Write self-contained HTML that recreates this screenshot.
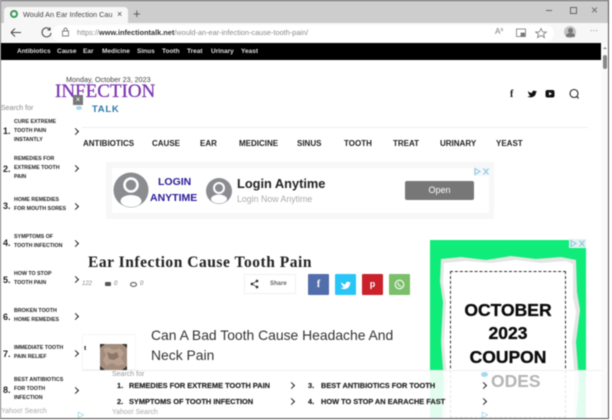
<!DOCTYPE html>
<html><head><meta charset="utf-8">
<style>
html,body{margin:0;padding:0;background:#fff}
#p{position:relative;width:612px;height:420px;overflow:hidden;background:#fff;font-family:"Liberation Sans",sans-serif;color:#111;filter:blur(.45px)}
.a{position:absolute;white-space:nowrap}
.n{font-size:6.5px;font-weight:bold;color:#ddd;top:48px}
.m{font-size:8px;font-weight:bold;color:#222;top:139px}
.sn{font-size:5.3px;font-weight:bold;line-height:9px;color:#222;white-space:nowrap;position:absolute;left:14px}
.num{position:absolute;left:3px;font-size:9px;font-weight:bold;color:#222}
.chev{position:absolute;width:4px;height:4px;border-top:1.2px solid #222;border-right:1.2px solid #222;transform:rotate(45deg)}
.soc{position:absolute;top:274px;width:21px;height:21px;color:#fff;text-align:center;font-weight:bold;font-size:10px;line-height:21px;border-radius:1px}
.b{font-size:7.4px;font-weight:bold;color:#222;-webkit-text-stroke:.15px #222}
</style></head><body><div id="p">
<!-- browser chrome -->
<div class="a" style="left:0;top:1px;width:608px;height:22px;background:#cdcdcd"></div>
<div class="a" style="left:0;top:0;width:608px;height:1px;background:#555"></div>
<div class="a" style="left:4px;top:7px;width:124px;height:16px;background:#f7f7f7;border-radius:4px 4px 0 0"></div>
<div class="a" style="left:10px;top:10px;width:4px;height:4px;border:2px solid #3a9a55;border-radius:50%"></div>
<div class="a" style="left:23px;top:10px;font-size:7.3px;color:#444;width:89px;overflow:hidden">Would An Ear Infection Cause To</div>
<div class="a" style="left:117px;top:9px;font-size:9px;color:#444">×</div>
<div class="a" style="left:133px;top:6px;font-size:13px;color:#555">+</div>
<div class="a" style="left:0;top:23px;width:608px;height:20px;background:#f7f7f7"></div>
<div class="a" style="left:52px;top:25px;width:502px;height:17px;background:#fff;border-radius:9px"></div>
<svg class="a" style="left:8px;top:25px" width="55" height="16" fill="none" stroke="#444" stroke-width="1"><path d="M3 7.500H13M3 7.500L7 3.500M3 7.500L7 11.500"/><path d="M42 4.500A4.500 4.500 0 1 0 43 8M42 2.500V5H39.500"/></svg>
<svg class="a" style="left:61px;top:27px" width="10" height="11" fill="none" stroke="#666" stroke-width=".8"><rect x="1.500" y="4" width="6" height="5"/><path d="M3 4V2.500A1.500 1.500 0 0 1 6 2.500V4"/></svg>
<div class="a" style="left:77px;top:28px;font-size:7.35px;color:#8a8a8a">https://<b style="color:#333;font-weight:bold">www.infectiontalk.net</b>/would-an-ear-infection-cause-tooth-pain/</div>
<div class="a" style="left:495px;top:27px;font-size:8px;color:#777">A<span style="font-size:5px;vertical-align:3px">a</span></div>
<svg class="a" style="left:515px;top:27px" width="50" height="12" fill="none" stroke="#777" stroke-width=".8"><rect x="1.500" y="2" width="9" height="7.500"/><path d="M6 6H9.500V9.500H6Z" fill="#777"/><path d="M26 1.500L27.700 5H31.300L28.500 7.300L29.500 10.500L26 8.500L22.500 10.500L23.500 7.300L20.700 5H24.300Z"/></svg>
<div class="a" style="left:564px;top:26px;width:12px;height:12px;background:#c4c4c4;border-radius:50%"></div>
<div class="a" style="left:568px;top:28px;width:5px;height:5px;background:#777;border-radius:50%"></div>
<div class="a" style="left:566px;top:33px;width:9px;height:4px;background:#777;border-radius:4px 4px 1px 1px"></div>
<div class="a" style="left:590px;top:26px;font-size:8px;color:#666">···</div>
<div class="a" style="left:546px;top:10px;width:6px;height:1px;background:#666"></div>
<div class="a" style="left:570px;top:7px;width:5px;height:5px;border:1px solid #666"></div>
<div class="a" style="left:591px;top:3px;font-size:12px;color:#666">×</div>
<!-- top bar -->
<div class="a" style="left:0;top:43px;width:601px;height:17px;background:#000"></div>
<div class="a n" style="left:17px">Antibiotics</div>
<div class="a n" style="left:57px">Cause</div>
<div class="a n" style="left:83px">Ear</div>
<div class="a n" style="left:102px">Medicine</div>
<div class="a n" style="left:137px">Sinus</div>
<div class="a n" style="left:162px">Tooth</div>
<div class="a n" style="left:187px">Treat</div>
<div class="a n" style="left:211px">Urinary</div>
<div class="a n" style="left:241px">Yeast</div>
<!-- scrollbar -->
<div class="a" style="left:601px;top:43px;width:7px;height:375px;background:#fafafa"></div>
<div class="a" style="left:603px;top:47px;width:0;height:0;border-left:2px solid transparent;border-right:2px solid transparent;border-bottom:2px solid #888"></div>
<div class="a" style="left:603px;top:55px;width:4px;height:14px;background:#888;border-radius:2px"></div>
<!-- header -->
<div class="a" style="left:66px;top:75px;font-size:7.200px;color:#444">Monday, October 23, 2023</div>
<div class="a" style="left:55px;top:81px;font-size:19px;font-family:'Liberation Serif',serif;color:#7a35b0;-webkit-text-stroke:.25px #7a35b0">INFECTION</div>
<div class="a" style="left:92px;top:104px;font-size:9.500px;font-weight:bold;letter-spacing:.7px;color:#2d7aa8">TALK</div>
<div class="a" style="left:73px;top:95px;width:10px;height:10px;background:#777;color:#fff;font-size:8px;line-height:10px;text-align:center">×</div>
<div class="a" style="left:76px;top:106px;width:6px;height:4px;background:#a8d8ec;border-radius:50%"></div>
<div class="a" style="left:510px;top:89px;font-size:10px;font-weight:bold;font-family:'Liberation Serif',serif;color:#111">f</div>
<svg class="a" style="left:524px;top:87px" width="64" height="14"><path d="M4 4C5.500 5.500 7 6 8 6C8 3.800 10.300 3 11.500 4.300L13 4L12 5.500C12 8.500 9 10.800 6 10.300C5 10.300 4 10 3.500 9.500C4.800 9.500 5.500 9 6.300 8.500C5 8 4.300 6.500 4 4Z" fill="#111"/><rect x="21.500" y="3" width="9" height="7.500" rx="2" fill="#111"/><path d="M25 5V8.500L28 6.800Z" fill="#fff"/><circle cx="50" cy="6.500" r="4" fill="none" stroke="#222" stroke-width="1.100"/><path d="M53 9.500L54.500 11.500" stroke="#222" stroke-width="1.200"/></svg>
<div class="a" style="left:82px;top:127px;width:506px;height:1px;background:#eee"></div>
<!-- main nav -->
<div class="a m" style="left:83px">ANTIBIOTICS</div>
<div class="a m" style="left:152px">CAUSE</div>
<div class="a m" style="left:200px">EAR</div>
<div class="a m" style="left:239px">MEDICINE</div>
<div class="a m" style="left:297px">SINUS</div>
<div class="a m" style="left:344px">TOOTH</div>
<div class="a m" style="left:393px">TREAT</div>
<div class="a m" style="left:440px">URINARY</div>
<div class="a m" style="left:496px">YEAST</div>
<!-- top ad -->
<div class="a" style="left:106px;top:162px;width:388px;height:57px;background:#f7f7f7"></div>
<div class="a" style="left:112px;top:168px;width:377px;height:45px;background:#fff"></div>
<svg class="a" style="left:113px;top:172px" width="40" height="38"><circle cx="18" cy="18" r="17.500" fill="#8a8c90"/><circle cx="18" cy="13" r="6.500" fill="none" stroke="#fff" stroke-width="2.500"/><ellipse cx="18" cy="29" rx="10.500" ry="6" fill="#fff"/></svg>
<svg class="a" style="left:206px;top:178px" width="27" height="27"><circle cx="13" cy="13" r="13" fill="#8a8c90"/><circle cx="13" cy="10" r="5" fill="none" stroke="#fff" stroke-width="2"/><ellipse cx="13" cy="21" rx="8" ry="4.500" fill="#fff"/></svg>
<div class="a" style="left:158px;top:176px;font-size:10.500px;font-weight:bold;color:#2a1a9a">LOGIN</div>
<div class="a" style="left:150px;top:192px;font-size:10.500px;font-weight:bold;color:#2a1a9a">ANYTIME</div>
<div class="a" style="left:237px;top:176px;font-size:12.800px;font-weight:bold;color:#222">Login Anytime</div>
<div class="a" style="left:237px;top:194px;font-size:8.800px;color:#aaa">Login Now Anytime</div>
<div class="a" style="left:405px;top:181px;width:69px;height:19px;background:#777;border-radius:2px;color:#fff;font-size:9px;line-height:19px;text-align:center">Open</div>
<svg class="a" style="left:473px;top:167px" width="17" height="9" fill="none" stroke="#8cc4de" stroke-width="1"><rect width="17" height="9" fill="#f3f8fb" stroke="none"/><path d="M2 1.500V7.500L7 4.500Z"/><path d="M10.500 1.500L15.500 7.500M15.500 1.500L10.500 7.500"/></svg>
<!-- title -->
<div class="a" style="left:88px;top:254px;font-size:15.500px;font-weight:bold;font-family:'Liberation Serif',serif;color:#222;letter-spacing:.53px">Ear Infection Cause Tooth Pain</div>
<div class="a" style="left:82px;top:281px;font-size:6px;font-style:italic;color:#888">122</div>
<div class="a" style="left:105px;top:282px;width:6px;height:4px;background:#555;border-radius:1px"></div>
<div class="a" style="left:114px;top:281px;font-size:6px;font-style:italic;color:#777">0</div>
<div class="a" style="left:130px;top:282px;width:7px;height:5px;border:1px solid #555;border-radius:50%;box-sizing:border-box"></div>
<div class="a" style="left:140px;top:281px;font-size:6px;font-style:italic;color:#777">0</div>
<div class="a" style="left:244px;top:274px;width:52px;height:20px;border:1px solid #f0f0f0;box-sizing:border-box"></div>
<svg class="a" style="left:250px;top:279px" width="9" height="10" fill="#333" stroke="#333" stroke-width=".7"><circle cx="2" cy="5" r="1"/><circle cx="7" cy="2" r="1"/><circle cx="7" cy="8" r="1"/><path d="M2 5L7 2M2 5L7 8"/></svg>
<div class="a" style="left:270px;top:281px;font-size:6px;font-weight:bold;color:#666">Share</div>
<div class="soc" style="left:308px;background:#516eab;font-family:'Liberation Serif',serif">f</div>
<div class="soc" style="left:335px;background:#29c5f6"><svg width="11" height="10" style="margin-top:6px"><path d="M1 2C2.500 3.500 4 4.500 5.500 4.500C5.500 2 8 1 9.500 2.500L11 2L10 3.500C10 7 7 9.500 3.500 9C2.500 9 1.500 8.500 .5 8C2 8 3 7.500 4 7C2.500 6.500 1.500 5 1 2Z" fill="#fff"/></svg></div>
<div class="soc" style="left:362px;background:#ca212a;font-size:9px">p</div>
<div class="soc" style="left:389px;background:#7bbf6a"><svg width="11" height="11" style="margin-top:5px" fill="none" stroke="#fff" stroke-width="1.100"><circle cx="5.500" cy="5.500" r="4.300"/><path d="M4 3.500C4 6 5.500 7.500 7.500 7.500"/></svg></div>
<!-- related article -->
<div class="a" style="left:82px;top:334px;width:54px;height:36px;border:1px solid #f6f6f6;box-sizing:border-box"></div>
<div class="a" style="left:84px;top:344px;font-size:7px;font-weight:bold;font-family:'Liberation Serif',serif">t</div>
<svg class="a" style="left:100px;top:344px" width="27" height="26"><rect width="27" height="26" fill="#a38c7c"/><path d="M3 5L8 3L14 6L20 4L24 9L21 14L25 20L18 22L12 19L6 22L3 16L6 11Z" fill="#b7a090"/><path d="M7 8L12 10L17 8L19 13L14 16L9 15Z" fill="#8f7767"/><path d="M0 0H5L0 4ZM27 0H22L27 4ZM0 26H5L0 22ZM27 26H22L27 22Z" fill="#333"/></svg>
<div class="a" style="left:151px;top:326px;font-size:13.900px;line-height:19.500px;color:#333;white-space:normal;width:260px">Can A Bad Tooth Cause Headache And Neck Pain</div>
<!-- right ad -->
<div class="a" style="left:430px;top:240px;width:156px;height:178px;background:#10ec79"></div>
<svg class="a" style="left:436px;top:252px" width="146" height="166"><path d="M5 7L25 5L50 8L75 4L100 7L125 5L140 8L141 40L144 58L140 90L143 130L140 166H6L8 130L5 90L7 50L4 30Z" fill="#e4e6e4"/><path d="M8 11L30 9L55 11L80 8L105 11L130 9L137 12L137 45L140 60L136 90L139 130L137 166H10L11 130L8 90L10 50L7 30Z" fill="#fff"/></svg>
<div class="a" style="left:450px;top:271px;width:116px;height:147px;border:1px dashed #333;box-sizing:border-box"></div>
<div class="a" style="left:450px;top:299px;width:116px;text-align:center;font-size:17.500px;font-weight:bold;line-height:23.400px;color:#0a0a0a;-webkit-text-stroke:.3px #0a0a0a">OCTOBER<br>2023<br>COUPON</div>
<svg class="a" style="left:569px;top:239px" width="17" height="9" fill="none" stroke="#8cc4de" stroke-width="1"><rect width="17" height="9" fill="#dff4ee" stroke="none"/><path d="M2 1.500V7.500L7 4.500Z"/><path d="M10.500 1.500L15.500 7.500M15.500 1.500L10.500 7.500"/></svg>
<!-- bottom overlay -->
<div class="a" style="left:82px;top:370px;width:519px;height:48px;background:rgba(255,255,255,.88)"></div>
<div class="a" style="left:82px;top:370px;width:519px;height:1px;background:#eee"></div>
<div class="a" style="left:491px;top:371px;font-size:17.500px;font-weight:bold;color:#b5b5b5">ODES</div>
<div class="a" style="left:112px;top:371px;font-size:7px;color:#999">Search for</div>
<div class="a b" style="left:117px;top:381px">1.</div>
<div class="a b" style="left:129px;top:381px">REMEDIES FOR EXTREME TOOTH PAIN</div>
<div class="a b" style="left:117px;top:397px">2.</div>
<div class="a b" style="left:129px;top:397px">SYMPTOMS OF TOOTH INFECTION</div>
<div class="a b" style="left:308px;top:381px">3.</div>
<div class="a b" style="left:321px;top:381px">BEST ANTIBIOTICS FOR TOOTH</div>
<div class="a b" style="left:308px;top:397px">4.</div>
<div class="a b" style="left:321px;top:397px">HOW TO STOP AN EARACHE FAST</div>
<div class="chev" style="left:289px;top:383px"></div>
<div class="chev" style="left:289px;top:399px"></div>
<div class="chev" style="left:481px;top:383px"></div>
<div class="chev" style="left:481px;top:399px"></div>
<div class="a" style="left:481px;top:372px;width:7px;height:5px;background:#a8d8ec;border-radius:50%"></div>
<div class="a" style="left:482px;top:410px;font-size:8px;color:#4fb8d8">▷</div>
<div class="a" style="left:112px;top:409px;font-size:7px;color:#aaa">Yahoo! Search</div>
<!-- left sidebar -->
<div class="a" style="left:0;top:112px;width:82px;height:306px;background:rgba(255,255,255,.97)"></div>
<div class="a" style="left:1px;top:105px;font-size:7px;color:#888">Search for</div>
<div class="num" style="top:126px">1.</div><div class="sn" style="top:118px">CURE EXTREME<br>TOOTH PAIN<br>INSTANTLY</div><div class="chev" style="left:73px;top:129px"></div>
<div class="num" style="top:164px">2.</div><div class="sn" style="top:155px">REMEDIES FOR<br>EXTREME TOOTH<br>PAIN</div><div class="chev" style="left:73px;top:166px"></div>
<div class="num" style="top:201px">3.</div><div class="sn" style="top:196px">HOME REMEDIES<br>FOR MOUTH SORES</div><div class="chev" style="left:73px;top:204px"></div>
<div class="num" style="top:238px">4.</div><div class="sn" style="top:233px">SYMPTOMS OF<br>TOOTH INFECTION</div><div class="chev" style="left:73px;top:241px"></div>
<div class="num" style="top:275px">5.</div><div class="sn" style="top:270px">HOW TO STOP<br>TOOTH PAIN</div><div class="chev" style="left:73px;top:277px"></div>
<div class="num" style="top:312px">6.</div><div class="sn" style="top:307px">BROKEN TOOTH<br>HOME REMEDIES</div><div class="chev" style="left:73px;top:314px"></div>
<div class="num" style="top:349px">7.</div><div class="sn" style="top:344px">IMMEDIATE TOOTH<br>PAIN RELIEF</div><div class="chev" style="left:73px;top:351px"></div>
<div class="num" style="top:385px">8.</div><div class="sn" style="top:376px">BEST ANTIBIOTICS<br>FOR TOOTH<br>INFECTION</div><div class="chev" style="left:73px;top:388px"></div>
<div class="a" style="left:1px;top:408px;font-size:7px;color:#aaa">Yahoo! Search</div>
<div class="a" style="left:78px;top:410px;font-size:8px;color:#4fb8d8">▷</div>
<!-- window frame -->
<div class="a" style="left:608px;top:0;width:1px;height:419px;background:#555"></div>
<div class="a" style="left:0;top:0;width:1px;height:419px;background:#777"></div>
<div class="a" style="left:0;top:418px;width:609px;height:1px;background:#555"></div>
<div class="a" style="left:609px;top:0;width:3px;height:420px;background:#fff"></div>
<div class="a" style="left:0;top:419px;width:612px;height:1px;background:#fff"></div>
</div></body></html>
